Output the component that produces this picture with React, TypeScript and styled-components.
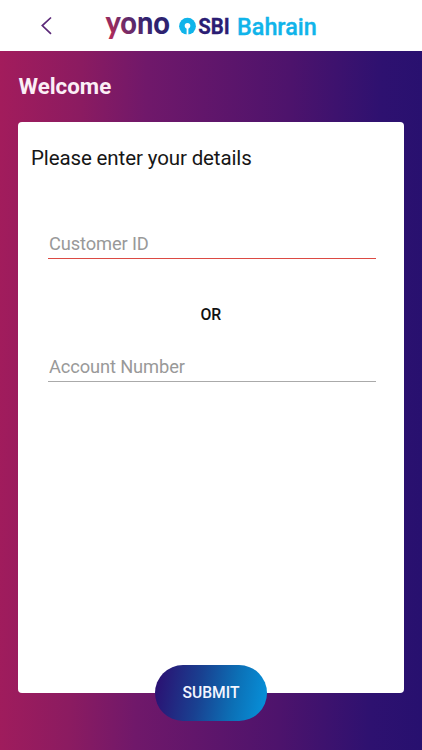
import React from "react";
import styled, { createGlobalStyle } from "styled-components";

const GlobalStyle = createGlobalStyle`
  * { box-sizing: border-box; }
  body { margin: 0; font-family: Roboto, "Liberation Sans", sans-serif; }
`;

const Screen = styled.div`
  display: flex;
  flex-direction: column;
  width: 422px;
  height: 750px;
  overflow: hidden;
  background: linear-gradient(91deg, #a31c5c 0%, #8b1b61 19%, #70186a 34%, #4d136c 67%, #2e1170 88%, #27106f 100%);
`;

const Header = styled.header`
  display: flex;
  flex: none;
  align-items: flex-start;
  height: 51px;
  padding-left: 36px;
  background: #fff;
`;

const BackButton = styled.button`
  width: 20px;
  height: 51px;
  padding: 0;
  border: 0;
  background: none;
  svg { display: block; }
`;

const Brand = styled.div`
  display: flex;
  margin-left: 48px;
  svg { display: block; }
`;

const Region = styled.span`
  margin-left: 2px;
  color: #10b4ea;
  font-size: 23.4px;
  font-weight: 500;
  line-height: 54px;
  -webkit-text-stroke: 0.35px #10b4ea;
`;

const Title = styled.h1`
  flex: none;
  height: 71px;
  margin: 0;
  padding-left: 18.5px;
  color: #fbeef6;
  font-size: 22.3px;
  font-weight: 700;
  line-height: 70px;
`;

const Card = styled.form`
  display: flex;
  flex: none;
  flex-direction: column;
  width: 385.6px;
  height: 571.4px;
  margin-left: 18.2px;
  padding: 0 27px 0 29.8px;
  border-radius: 4px;
  background: #fff;
`;

const Prompt = styled.p`
  height: 101px;
  margin: 0 0 0 -17px;
  color: #161616;
  font-size: 20.5px;
  line-height: 72px;
  letter-spacing: -0.12px;
`;

const Field = styled.input<{ $invalid?: boolean }>`
  flex: none;
  width: 328px;
  height: 36px;
  padding: 6px 1px 0;
  border: 0;
  border-bottom: 1px solid ${(p) => (p.$invalid ? "#dc4a43" : "#aaa")};
  border-radius: 0;
  outline: 0;
  background: none;
  font: 18.3px/28px Roboto, "Liberation Sans", sans-serif;
  letter-spacing: -0.12px;
  &::placeholder { color: #999; opacity: 1; }
`;

const Divider = styled.div`
  height: 86.6px;
  padding-right: 3px;
  color: #111;
  font-size: 15.8px;
  font-weight: 500;
  line-height: 112px;
  text-align: center;
`;

const Submit = styled.button`
  flex: none;
  align-self: center;
  width: 112.4px;
  height: 56.2px;
  margin-top: -28.2px;
  padding: 0 0 1px;
  border: 0;
  border-radius: 28.1px;
  background: linear-gradient(100deg, #2a1273 4%, #194191 40%, #0c70b6 70%, #078fd8 96%);
  color: #f4f6ff;
  font: 500 15.6px/20px Roboto, "Liberation Sans", sans-serif;
`;

export default function App() {
  return (
    <>
      <GlobalStyle />
      <Screen>
        <Header>
          <BackButton aria-label="Back">
            <svg width="20" height="51" viewBox="0 0 20 51" fill="none">
              <path d="M15 17.500 6.300 25.600l8.700 8.200" stroke="#5b2878" strokeWidth="1.700" />
            </svg>
          </BackButton>
          <Brand>
            <svg width="131" height="51" viewBox="104 0 131 51">
              <defs>
                <linearGradient id="yono" gradientUnits="userSpaceOnUse" x1="110" y1="40" x2="146" y2="16">
                  <stop offset="0" stopColor="#b82b58" />
                  <stop offset="0.5" stopColor="#702c68" />
                  <stop offset="1" stopColor="#2e2270" />
                </linearGradient>
              </defs>
              <text x="105.500" y="34" fontFamily="Lato" fontWeight="900" fontSize="31.500" textLength="64.500" lengthAdjust="spacingAndGlyphs" fill="url(#yono)">yono</text>
              <circle cx="187.500" cy="26.200" r="8.400" fill="#10b4ea" />
              <circle cx="187.500" cy="25.800" r="2.800" fill="#fff" />
              <path d="M186.600 27h1.800v8h-1.800z" fill="#fff" />
              <text x="198.300" y="34" fontFamily="Roboto" fontWeight="700" fontSize="21.800" textLength="31.500" lengthAdjust="spacingAndGlyphs" fill="#2b1d74" stroke="#2b1d74" strokeWidth="0.300">SBI</text>
            </svg>
            <Region>Bahrain</Region>
          </Brand>
        </Header>
        <Title>Welcome</Title>
        <Card onSubmit={(e) => e.preventDefault()}>
          <Prompt>Please enter your details</Prompt>
          <Field $invalid placeholder="Customer ID" />
          <Divider>OR</Divider>
          <Field placeholder="Account Number" />
        </Card>
        <Submit>SUBMIT</Submit>
      </Screen>
    </>
  );
}
